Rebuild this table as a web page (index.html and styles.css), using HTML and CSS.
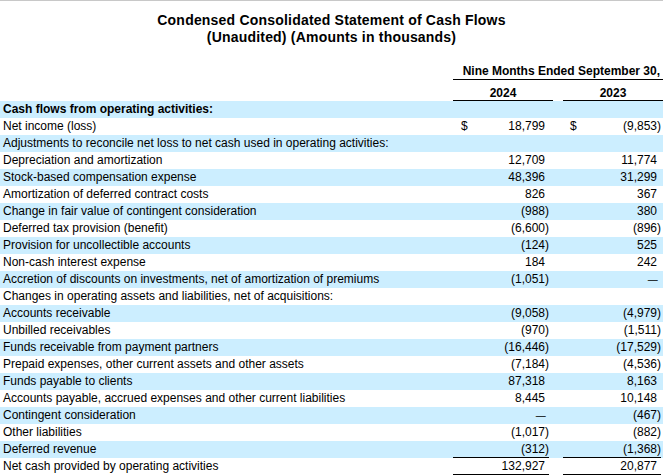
FILE: index.html
```html
<!DOCTYPE html>
<html>
<head>
<meta charset="utf-8">
<link rel="stylesheet" href="styles.css">
</head>
<body>
<div class="page">
  <div class="title">
    <div>Condensed Consolidated Statement of Cash Flows</div>
    <div>(Unaudited) (Amounts in thousands)</div>
  </div>
  <div class="hdr hdr1">
    <div></div>
    <div class="span">Nine Months Ended September 30,</div>
  </div>
  <div class="hdr hdr2">
    <div></div>
    <div class="yr">2024</div>
    <div></div>
    <div class="yr">2023</div>
  </div>
  <div class="rows">
    <div class="row b"><div class="lbl bold">Cash flows from operating activities:</div><div></div><div></div><div></div></div>
    <div class="row"><div class="lbl">Net income (loss)</div><div class="v c1"><span>$</span><span class="pos">18,799</span></div><div></div><div class="v c2"><span>$</span><span>(9,853)</span></div></div>
    <div class="row b"><div class="lbl">Adjustments to reconcile net loss to net cash used in operating activities:</div><div></div><div></div><div></div></div>
    <div class="row"><div class="lbl">Depreciation and amortization</div><div class="v"><span class="pos">12,709</span></div><div></div><div class="v"><span class="pos">11,774</span></div></div>
    <div class="row b"><div class="lbl">Stock-based compensation expense</div><div class="v"><span class="pos">48,396</span></div><div></div><div class="v"><span class="pos">31,299</span></div></div>
    <div class="row"><div class="lbl">Amortization of deferred contract costs</div><div class="v"><span class="pos">826</span></div><div></div><div class="v"><span class="pos">367</span></div></div>
    <div class="row b"><div class="lbl">Change in fair value of contingent consideration</div><div class="v"><span>(988)</span></div><div></div><div class="v"><span class="pos">380</span></div></div>
    <div class="row"><div class="lbl">Deferred tax provision (benefit)</div><div class="v"><span>(6,600)</span></div><div></div><div class="v"><span>(896)</span></div></div>
    <div class="row b"><div class="lbl">Provision for uncollectible accounts</div><div class="v"><span>(124)</span></div><div></div><div class="v"><span class="pos">525</span></div></div>
    <div class="row"><div class="lbl">Non-cash interest expense</div><div class="v"><span class="pos">184</span></div><div></div><div class="v"><span class="pos">242</span></div></div>
    <div class="row b"><div class="lbl">Accretion of discounts on investments, net of amortization of premiums</div><div class="v"><span>(1,051)</span></div><div></div><div class="v"><span class="pos dash">—</span></div></div>
    <div class="row"><div class="lbl">Changes in operating assets and liabilities, net of acquisitions:</div><div></div><div></div><div></div></div>
    <div class="row b"><div class="lbl">Accounts receivable</div><div class="v"><span>(9,058)</span></div><div></div><div class="v"><span>(4,979)</span></div></div>
    <div class="row"><div class="lbl">Unbilled receivables</div><div class="v"><span>(970)</span></div><div></div><div class="v"><span>(1,511)</span></div></div>
    <div class="row b"><div class="lbl">Funds receivable from payment partners</div><div class="v"><span>(16,446)</span></div><div></div><div class="v"><span>(17,529)</span></div></div>
    <div class="row"><div class="lbl">Prepaid expenses, other current assets and other assets</div><div class="v"><span>(7,184)</span></div><div></div><div class="v"><span>(4,536)</span></div></div>
    <div class="row b"><div class="lbl">Funds payable to clients</div><div class="v"><span class="pos">87,318</span></div><div></div><div class="v"><span class="pos">8,163</span></div></div>
    <div class="row"><div class="lbl">Accounts payable, accrued expenses and other current liabilities</div><div class="v"><span class="pos">8,445</span></div><div></div><div class="v"><span class="pos">10,148</span></div></div>
    <div class="row b"><div class="lbl">Contingent consideration</div><div class="v"><span class="pos dash">—</span></div><div></div><div class="v"><span>(467)</span></div></div>
    <div class="row"><div class="lbl">Other liabilities</div><div class="v"><span>(1,017)</span></div><div></div><div class="v"><span>(882)</span></div></div>
    <div class="row b"><div class="lbl">Deferred revenue</div><div class="v ul"><span>(312)</span></div><div></div><div class="v ul"><span>(1,368)</span></div></div>
    <div class="row"><div class="lbl">Net cash provided by operating activities</div><div class="v ul"><span class="pos">132,927</span></div><div></div><div class="v ul"><span class="pos">20,877</span></div></div>
  </div>
</div>
</body>
</html>
```
FILE: styles.css
```css
html, body {
  margin: 0;
  padding: 0;
  background: #fff;
}
body {
  font-family: "Liberation Sans", Arial, sans-serif;
  font-size: 12px;
  color: #000;
}
.page {
  width: 663px;
  border-top: 1px solid #c8c8c8;
}
.title {
  margin-top: 11px;
  text-align: center;
  font-weight: bold;
  font-size: 14px;
  letter-spacing: 0.2px;
  line-height: 17px;
}
.hdr {
  display: grid;
  grid-template-columns: 453px 100px 10px 100px;
  font-weight: bold;
}
.hdr1 {
  margin-top: 17px;
  line-height: 15px;
}
.hdr1 .span {
  grid-column: 2 / 5;
  text-align: right;
  padding-right: 3px;
  padding-top: 1px;
  border-bottom: 1px solid #000;
}
.hdr2 {
  margin-top: 4px;
  line-height: 14px;
}
.yr {
  text-align: center;
  padding-top: 2px;
  border-bottom: 1px solid #000;
}
.row {
  display: grid;
  grid-template-columns: 453px 96px 14px 98px;
  height: 17px;
  line-height: 17px;
  white-space: nowrap;
}
.row.b {
  background: #cceeff;
}
.lbl {
  padding-left: 3px;
}
.bold {
  font-weight: bold;
}
.v {
  display: flex;
  justify-content: flex-end;
}
.v.c1 {
  justify-content: space-between;
  padding-left: 8px;
}
.v.c2 {
  justify-content: space-between;
  padding-left: 7px;
}
.pos::after {
  content: ")";
  visibility: hidden;
}
.dash {
  font-size: 10px;
}
.v.ul {
  box-sizing: border-box;
  border-bottom: 1px solid #000;
  line-height: 16px;
}
```
